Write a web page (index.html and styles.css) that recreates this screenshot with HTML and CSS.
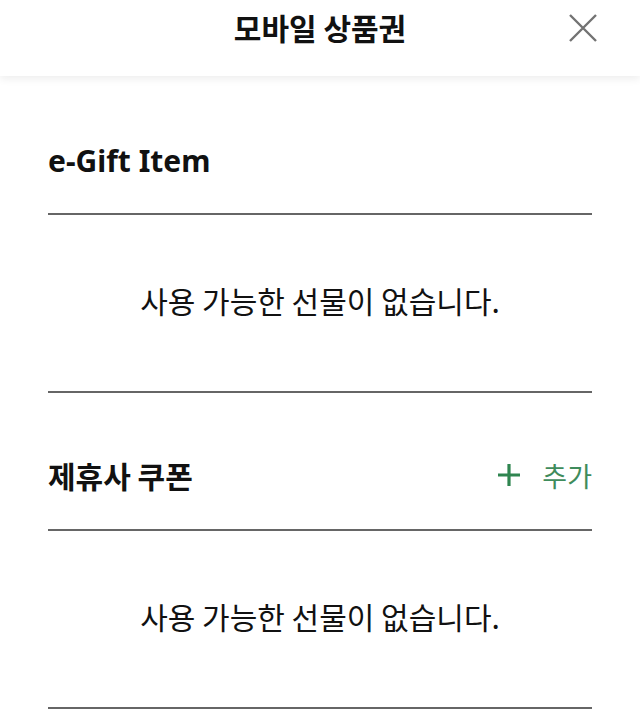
FILE: index.html
```html
<!DOCTYPE html>
<html>
<head>
    <title>모바일 상품권</title>
    <link rel="stylesheet" href="styles.css">
</head>
<body>
    <div class="header">
        <div></div>
        <h1 class="header-title">모바일 상품권</h1>
        <button class="close-button" aria-label="닫기">
            <svg width="28" height="28" viewBox="0 0 28 28">
                <path d="M1 1 L27 27 M27 1 L1 27" stroke="#737373" stroke-width="2.4" fill="none"/>
            </svg>
        </button>
    </div>

    <div class="content">
        <div class="section-head">
            <h2 class="section-title latin">e-Gift Item</h2>
        </div>
        <div class="empty">사용 가능한 선물이 없습니다.</div>

        <div class="section-head">
            <h2 class="section-title">제휴사 쿠폰</h2>
            <button class="add-button">
                <svg width="24" height="24" viewBox="0 0 24 24">
                    <path d="M12 1 V23 M1 12 H23" stroke="#2f8550" stroke-width="3.2" fill="none"/>
                </svg>
                <span>추가</span>
            </button>
        </div>
        <div class="empty">사용 가능한 선물이 없습니다.</div>
    </div>
</body>
</html>
```

FILE: styles.css
```css
body {
    margin: 0;
    font-family: "Noto Sans CJK KR", "Noto Sans", sans-serif;
    background-color: #fff;
    color: #111;
}
.header {
    display: grid;
    grid-template-columns: 1fr auto 1fr;
    align-items: center;
    height: 76px;
    background-color: #fff;
    box-shadow: 0 3px 8px rgba(0, 0, 0, 0.07);
}
.header-title {
    margin: 0;
    font-size: 30px;
    font-weight: bold;
    color: #111;
    padding-bottom: 22px;
}
.close-button {
    justify-self: end;
    margin-right: 43px;
    margin-bottom: 20px;
    padding: 0;
    border: none;
    background: none;
    display: flex;
}
.content {
    padding: 0 48px;
}
.section-head {
    display: flex;
    align-items: center;
    justify-content: space-between;
    padding-top: 31px;
    box-sizing: border-box;
    border-bottom: 2px solid #666;
    height: 139px;
}
.section-head + .empty + .section-head {
    height: 138px;
    padding-top: 28px;
}
.section-title {
    margin: 0;
    font-size: 30px;
    font-weight: bold;
    color: #111;
}
.section-title.latin {
    font-family: "Noto Sans", "Noto Sans CJK KR", sans-serif;
    font-weight: bold;
}
.add-button {
    display: flex;
    align-items: center;
    gap: 21px;
    padding: 0;
    border: none;
    background: none;
    font-family: inherit;
    font-size: 27px;
    color: #3f8c5c;
}
.empty {
    height: 178px;
    padding-bottom: 6px;
    box-sizing: border-box;
    border-bottom: 2px solid #666;
    display: flex;
    align-items: center;
    justify-content: center;
    font-size: 30px;
    color: #111;
}
```
